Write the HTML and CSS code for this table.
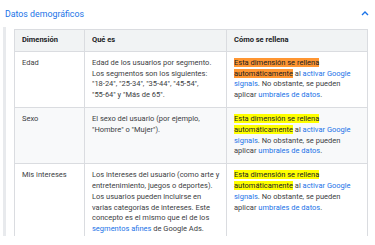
FILE: index.html
```html
<!DOCTYPE html>
<html lang="es">
<head>
<meta charset="utf-8">
<link rel="stylesheet" href="styles.css">
</head>
<body>
<section class="expander">
  <div class="exp-head">
    <span class="exp-title">Datos demográficos</span>
    <svg class="chev" width="8" height="5" viewBox="0 0 8 5"><path d="M1 4 L4 1 L7 4" fill="none" stroke="#1a73e8" stroke-width="1.4"/></svg>
  </div>
  <div class="exp-body">
    <table class="dims">
      <colgroup><col class="c1"><col class="c2"><col class="c3"></colgroup>
      <thead>
        <tr><th>Dimensión</th><th>Qué es</th><th>Cómo se rellena</th></tr>
      </thead>
      <tbody>
        <tr>
          <td>Edad</td>
          <td>Edad de los usuarios por segmento. Los segmentos son los siguientes: <span class="nb">"18-24",</span> <span class="nb">"25-34",</span> <span class="nb">"35-44",</span> <span class="nb">"45-54",</span> <span class="nb">"55-64"</span> y "Más de 65".</td>
          <td><mark class="hl-active">Esta dimensión se rellena automáticamente</mark> al <a href="#">activar Google signals</a>. No obstante, se pueden aplicar <a href="#">umbrales de datos</a>.</td>
        </tr>
        <tr class="alt">
          <td>Sexo</td>
          <td>El sexo del usuario (por ejemplo, "Hombre" o "Mujer").</td>
          <td><mark class="hl">Esta dimensión se rellena automáticamente</mark> al <a href="#">activar Google signals</a>. No obstante, se pueden aplicar <a href="#">umbrales de datos</a>.</td>
        </tr>
        <tr>
          <td>Mis intereses</td>
          <td>Los intereses del usuario (como arte y entretenimiento, juegos o deportes). Los usuarios pueden incluirse en varias categorías de intereses. Este concepto es el mismo que el de los <a href="#">segmentos afines</a> de Google Ads.</td>
          <td><mark class="hl">Esta dimensión se rellena automáticamente</mark> al <a href="#">activar Google signals</a>. No obstante, se pueden aplicar <a href="#">umbrales de datos</a>.</td>
        </tr>
      </tbody>
    </table>
  </div>
</section>
</body>
</html>
```
FILE: styles.css
```css
html, body {
  margin: 0;
  padding: 0;
  background: #fff;
}
body {
  font-family: Roboto, "Liberation Sans", Arial, sans-serif;
  color: #3c4043;
}
.expander {
  width: 375px;
}
.exp-head {
  display: flex;
  align-items: center;
  justify-content: space-between;
  height: 27px;
  padding: 0 6px 0 5px;
  box-sizing: border-box;
}
.exp-title {
  font-size: 8.8px;
  color: #1a73e8;
  line-height: 12px;
}
.chev {
  display: block;
}
.exp-body {
  margin-left: 3px;
  border-left: 3px solid #e8eaed;
  padding: 2px 0 0 8px;
  height: 209px;
  box-sizing: border-box;
}
.dims {
  border-collapse: collapse;
  table-layout: fixed;
  width: 353px;
  font-size: 7.5px;
  line-height: 10.8px;
}
.c1 { width: 70px; }
.c2 { width: 142px; }
.c3 { width: 141px; }
.dims th, .dims td {
  border: 1px solid #dadce0;
  padding: 6px 5px 6px 7px;
  text-align: left;
  vertical-align: top;
}
.dims th {
  background: #f1f3f4;
  color: #202124;
  font-weight: 700;
  padding-top: 5px;
  padding-bottom: 5px;
}
.dims tr.alt td {
  background: #f8f9fa;
}
.dims a {
  color: #1a73e8;
  text-decoration: none;
}
.nb {
  white-space: nowrap;
}
mark {
  color: #202124;
  padding: 0;
}
.hl { background: #ffff00; }
.hl-active { background: #ff9632; }
```
